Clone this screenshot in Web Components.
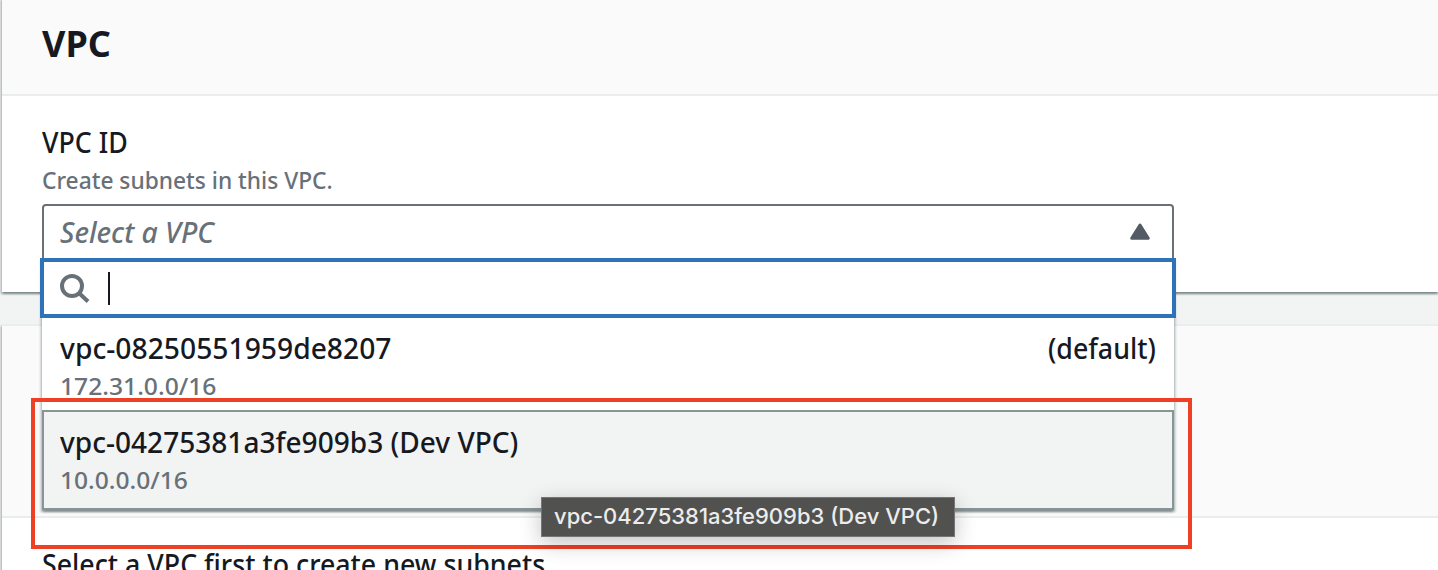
<!DOCTYPE html>
<html lang="en">
<head>
<meta charset="utf-8">
<title>Create subnet</title>
<style>
html, body { margin: 0; height: 570px; overflow: hidden; background: #f2f3f3; }
body { font-family: "Noto Sans", "Open Sans", sans-serif; color: #16191f; }
</style>
</head>
<body>
<subnet-page></subnet-page>
<script>
const define = (name, html, setup) => {
  const template = document.createElement('template');
  template.innerHTML = html;
  customElements.define(name, class extends HTMLElement {
    connectedCallback() {
      if (this.shadowRoot) return;
      this.attachShadow({ mode: 'open' }).append(template.content.cloneNode(true));
      if (setup) setup(this);
    }
  });
};

// One line of text, condensed or widened to the given measure.
define('text-line', `
<style>
:host { display: block; white-space: nowrap; }
span { display: inline-block; transform-origin: left center; }
:host([end]) { text-align: right; }
:host([end]) span { transform-origin: right center; }
</style><span><slot></slot></span>`, host => {
  const span = host.shadowRoot.querySelector('span');
  const natural = span.offsetWidth;
  const wanted = Number(host.getAttribute('measure'));
  if (natural && wanted) span.style.transform = 'scaleX(' + wanted / natural + ')';
});

define('panel-card', `
<style>
:host { display: block; box-sizing: border-box; background: #fff; border-top: 2px solid #eaeded;
  box-shadow: 0 2px 2px 0 rgba(0,28,36,.3), 2px 2px 2px 0 rgba(0,28,36,.15), -2px 2px 2px 0 rgba(0,28,36,.15); }
header { box-sizing: border-box; height: var(--head, 192px); background: #fafafa; border-bottom: 2px solid #eaeded; padding: 22px 40px 0; font: 700 36px/44px "Noto Sans", sans-serif; }
section { padding: 25px 40px 0; }
</style><header><slot name="title"></slot></header><section><slot></slot></section>`);

define('option-item', `
<style>
:host { display: block; box-sizing: border-box; height: 92px; padding: 9px 18px 0; background: #fff; }
:host([selected]) { height: 100px; padding: 9px 16px 0; border: 2px solid #879596; background: #f2f3f3; }
.row { display: flex; justify-content: space-between; font-size: 28px; line-height: 42px; font-weight: 500; }
.sub { font-size: 24px; line-height: 34px; font-weight: 500; color: #687078; }
</style><div class="row"><slot name="label"></slot><slot name="tag"></slot></div><div class="sub"><slot></slot></div>`);

define('search-field', `
<style>
:host { display: flex; align-items: center; box-sizing: border-box; height: 60px; margin: 0 -2px; padding-left: 15px; border: 4px solid #2e73b8; background: #fff; position: relative; }
svg { display: block; width: 32px; height: 32px; margin-top: 2px; }
i { width: 2px; height: 33px; margin: 1px 0 0 17px; background: #16191f; }
</style><svg viewBox="0 0 32 32" fill="none" stroke="#687078" stroke-width="4"><circle cx="13" cy="13" r="10"/><path d="M20 20l9 8.5"/></svg><i></i>`);

define('vpc-select', `
<style>
:host { display: block; position: relative; height: 54px; }
.trigger { display: flex; align-items: center; justify-content: space-between; box-sizing: border-box; height: 58px; padding: 0 22px 2px 16px; border: 2px solid #687078; border-radius: 4px; font: italic 500 28px/40px "Noto Sans", sans-serif; color: #687078; background: #fff; }
svg { width: 20px; height: 17px; margin-bottom: 1px; }
.menu { position: absolute; z-index: 3; top: 54px; left: 0; right: 0; box-shadow: 0 2px 2px 0 rgba(0,28,36,.3), 2px 2px 2px 0 rgba(0,28,36,.15), -2px 2px 2px 0 rgba(0,28,36,.15); }
</style>
<div class="trigger"><text-line measure="154">Select a VPC</text-line>
<svg viewBox="0 0 20 17"><path d="M10 2L18.3 15.2H1.7Z" fill="#545b64" stroke="#545b64" stroke-width="3" stroke-linejoin="round"/></svg></div>
<div class="menu"><search-field></search-field>
<option-item><text-line slot="label" measure="332">vpc-08250551959de8207</text-line><text-line slot="tag" end measure="108">(default)</text-line><text-line measure="156">172.31.0.0/16</text-line></option-item>
<option-item selected><text-line slot="label" measure="458">vpc-04275381a3fe909b3 (Dev VPC)</text-line><text-line measure="128">10.0.0.0/16</text-line></option-item>
</div>`);

define('hover-tip', `
<style>
:host { display: flex; align-items: center; box-sizing: border-box; position: absolute; z-index: 5; left: 541px; top: 497px; width: 414px; height: 40px; padding: 0 12px 2px; border: 1px solid #757573; background: #51514f; color: #ececec; font: 500 22px/30px Inter, sans-serif; box-shadow: 0 6px 22px rgba(0,0,0,.24); }
</style><slot></slot>`);

define('highlight-frame', `
<style>:host { position: absolute; z-index: 4; box-sizing: border-box; left: 31px; top: 398px; width: 1161px; height: 151px; border: 4px solid #ee4025; }</style>`);

define('subnet-page', `
<style>
:host { display: flex; flex-direction: column; gap: 32px; position: relative; box-sizing: border-box; height: 570px; overflow: hidden; padding-left: 2px; }
.first { --head: 96px; height: 294px; margin-top: -2px; flex: none; position: relative; z-index: 2; }
.second { --head: 192px; height: 300px; flex: none; }
.name { font-size: 28px; line-height: 42px; font-weight: 500; }
.hint { font-size: 24px; line-height: 34px; color: #687078; margin-bottom: 7px; font-weight: 500; }
vpc-select { width: 1132px; }
</style>
<panel-card class="first"><text-line slot="title" measure="69">VPC</text-line>
<text-line class="name" measure="86">VPC ID</text-line>
<text-line class="hint" measure="291">Create subnets in this VPC.</text-line>
<vpc-select></vpc-select></panel-card>
<panel-card class="second"><text-line class="name" measure="503">Select a VPC first to create new subnets</text-line></panel-card>
<highlight-frame></highlight-frame>
<hover-tip><text-line measure="385">vpc-04275381a3fe909b3 (Dev VPC)</text-line></hover-tip>`);
</script>
</body>
</html>
